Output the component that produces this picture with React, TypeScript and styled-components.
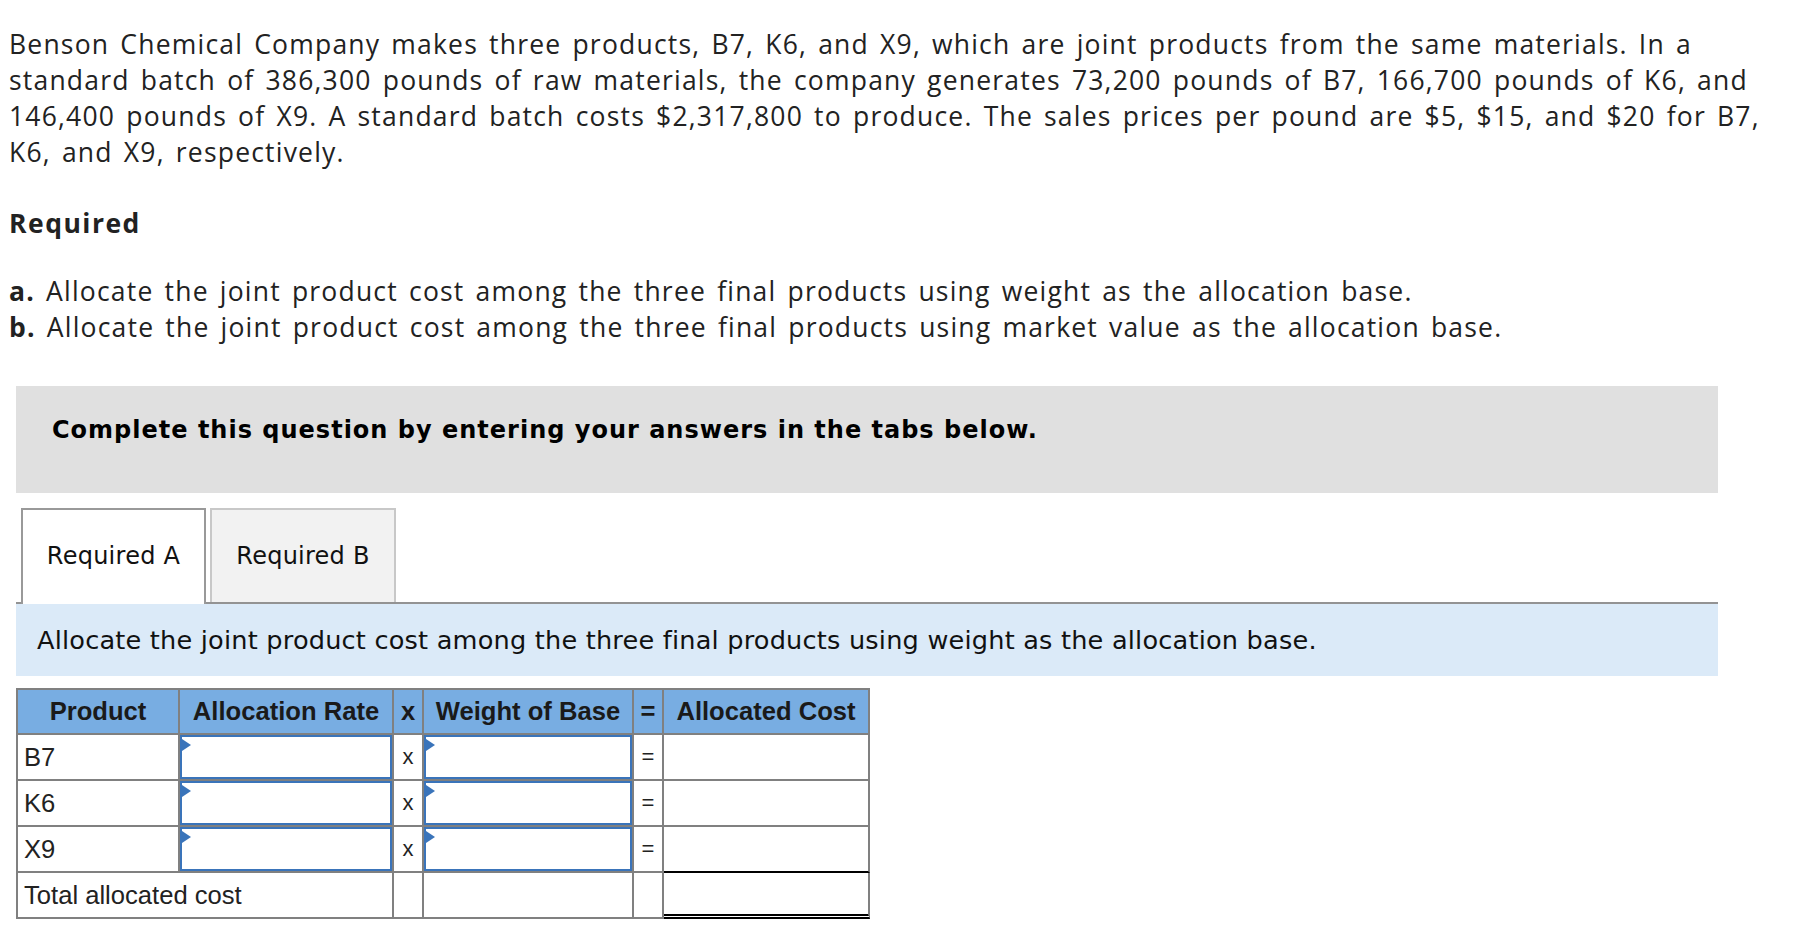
import React from "react";
import styled, { createGlobalStyle } from "styled-components";

const GlobalStyle = createGlobalStyle`
  html, body { margin: 0; padding: 0; background: #ffffff; }
  body { font-family: "Open Sans", sans-serif; color: #222222; }
  * { box-sizing: border-box; }
`;

const Page = styled.div`
  padding: 26px 8px 40px 9px;
`;

const textBase = `
  margin: 0;
  font-family: "Open Sans", "Noto Sans", sans-serif;
  font-size: 26.5px;
  line-height: 36px;
  letter-spacing: 1.2px;
  word-spacing: 3px;
  color: #222222;
`;

const Intro = styled.p`
  ${textBase}
`;

const Heading = styled.h3`
  ${textBase}
  margin-top: 35px;
  font-weight: 700;
  letter-spacing: 1.5px;
`;

const ReqList = styled.div`
  margin-top: 32px;
`;

const ReqItem = styled.p`
  ${textBase}
  b { font-weight: 700; }
`;

const Panel = styled.div`
  margin: 41px 0 0 7px;
  width: 1702px;
`;

const Banner = styled.div`
  height: 107px;
  background: #e0e0e0;
  padding: 29px 36px 0;
  font-family: "DejaVu Sans", Verdana, sans-serif;
  font-weight: 700;
  font-size: 24px;
  letter-spacing: 1px;
  line-height: 30px;
  color: #000000;
`;

const TabList = styled.div`
  margin-top: 15px;
  display: flex;
  align-items: flex-start;
  gap: 4px;
  padding-left: 5px;
  border-bottom: 2px solid #939393;
`;

const Tab = styled.div<{ $active?: boolean }>`
  width: ${(p) => (p.$active ? 185 : 186)}px;
  height: ${(p) => (p.$active ? 96 : 94)}px;
  margin-bottom: ${(p) => (p.$active ? -2 : 0)}px;
  display: flex;
  align-items: center;
  justify-content: center;
  padding-bottom: ${(p) => (p.$active ? 2 : 0)}px;
  border: 2px solid ${(p) => (p.$active ? "#999999" : "#c8c8c8")};
  border-bottom: none;
  background: ${(p) => (p.$active ? "#ffffff" : "#f2f2f2")};
  font-family: "DejaVu Sans", Verdana, sans-serif;
  font-size: 24px;
  letter-spacing: 0.25px;
  color: #111111;
`;

const Instruction = styled.div`
  height: 72px;
  background: #dbeaf8;
  padding-left: 21px;
  display: flex;
  align-items: center;
  font-family: "DejaVu Sans", Verdana, sans-serif;
  font-size: 25.6px;
  letter-spacing: 0.2px;
  color: #111111;
`;

const Table = styled.table`
  margin-top: 12px;
  width: 854px;
  table-layout: fixed;
  border-collapse: separate;
  border-spacing: 0;
  border-left: 2px solid #808080;
  border-top: 2px solid #808080;
  font-family: "Liberation Sans", Arial, sans-serif;
  font-size: 25.6px;
  color: #222222;
`;

const HeadCell = styled.th`
  height: 45px;
  padding: 0;
  background: #78ade2;
  border-right: 2px solid #808080;
  border-bottom: 2px solid #808080;
  font-weight: 700;
  text-align: center;
  vertical-align: middle;
  white-space: nowrap;
  color: #1a1a1a;
`;

type Bottom = "gray" | "black" | "double";

const Cell = styled.td<{ $center?: boolean; $bottom?: Bottom; $input?: boolean }>`
  height: 46px;
  padding: ${(p) => (p.$input ? "0" : "0 6px")};
  border-right: 2px solid #808080;
  border-bottom: ${(p) =>
    p.$bottom === "black"
      ? "2px solid #000000"
      : p.$bottom === "double"
      ? "5px double #000000"
      : "2px solid #808080"};
  text-align: ${(p) => (p.$center ? "center" : "left")};
  vertical-align: middle;
  white-space: nowrap;
  font-size: ${(p) => (p.$center ? "22px" : "25.6px")};
`;

const InputWrap = styled.div`
  position: relative;
  height: 44px;
  width: 100%;
`;

const Field = styled.input`
  display: block;
  width: 100%;
  height: 100%;
  margin: 0;
  border: 2px solid #3a74ba;
  border-radius: 0;
  background: #ffffff;
  outline: none;
  padding: 0 8px;
  font-family: "Liberation Sans", Arial, sans-serif;
  font-size: 22px;
`;

const Marker = styled.span`
  position: absolute;
  left: 2px;
  top: 4px;
  width: 0;
  height: 0;
  border-left: 9px solid #3a74ba;
  border-top: 6px solid transparent;
  border-bottom: 6px solid transparent;
  pointer-events: none;
`;

const InputCell = ({ bottom }: { bottom?: Bottom }) => (
  <Cell $input $bottom={bottom}>
    <InputWrap>
      <Field type="text" aria-label="answer" />
      <Marker />
    </InputWrap>
  </Cell>
);

const products = ["B7", "K6", "X9"];

export default function App() {
  return (
    <>
      <GlobalStyle />
      <Page>
        <Intro>
          Benson Chemical Company makes three products, B7, K6, and X9, which are joint products from the same
          materials. In a<br />
          standard batch of 386,300 pounds of raw materials, the company generates 73,200 pounds of B7, 166,700
          pounds of K6, and<br />
          146,400 pounds of X9. A standard batch costs $2,317,800 to produce. The sales prices per pound are $5, $15,
          and $20 for B7,<br />
          K6, and X9, respectively.
        </Intro>
        <Heading>Required</Heading>
        <ReqList>
          <ReqItem>
            <b>a.</b> Allocate the joint product cost among the three final products using weight as the allocation
            base.
          </ReqItem>
          <ReqItem>
            <b>b.</b> Allocate the joint product cost among the three final products using market value as the
            allocation base.
          </ReqItem>
        </ReqList>
        <Panel>
          <Banner>Complete this question by entering your answers in the tabs below.</Banner>
          <TabList>
            <Tab $active>Required A</Tab>
            <Tab>Required B</Tab>
          </TabList>
          <Instruction>
            Allocate the joint product cost among the three final products using weight as the allocation base.
          </Instruction>
          <Table>
            <colgroup>
              <col style={{ width: 162 }} />
              <col style={{ width: 214 }} />
              <col style={{ width: 30 }} />
              <col style={{ width: 210 }} />
              <col style={{ width: 30 }} />
              <col style={{ width: 206 }} />
            </colgroup>
            <thead>
              <tr>
                <HeadCell>Product</HeadCell>
                <HeadCell>Allocation Rate</HeadCell>
                <HeadCell>x</HeadCell>
                <HeadCell>Weight of Base</HeadCell>
                <HeadCell>=</HeadCell>
                <HeadCell>Allocated Cost</HeadCell>
              </tr>
            </thead>
            <tbody>
              {products.map((p, i) => (
                <tr key={p}>
                  <Cell>{p}</Cell>
                  <InputCell />
                  <Cell $center>x</Cell>
                  <InputCell />
                  <Cell $center>=</Cell>
                  <Cell $bottom={i === products.length - 1 ? "black" : "gray"} />
                </tr>
              ))}
              <tr>
                <Cell colSpan={2}>Total allocated cost</Cell>
                <Cell />
                <Cell />
                <Cell />
                <Cell $bottom="double" />
              </tr>
            </tbody>
          </Table>
        </Panel>
      </Page>
    </>
  );
}
